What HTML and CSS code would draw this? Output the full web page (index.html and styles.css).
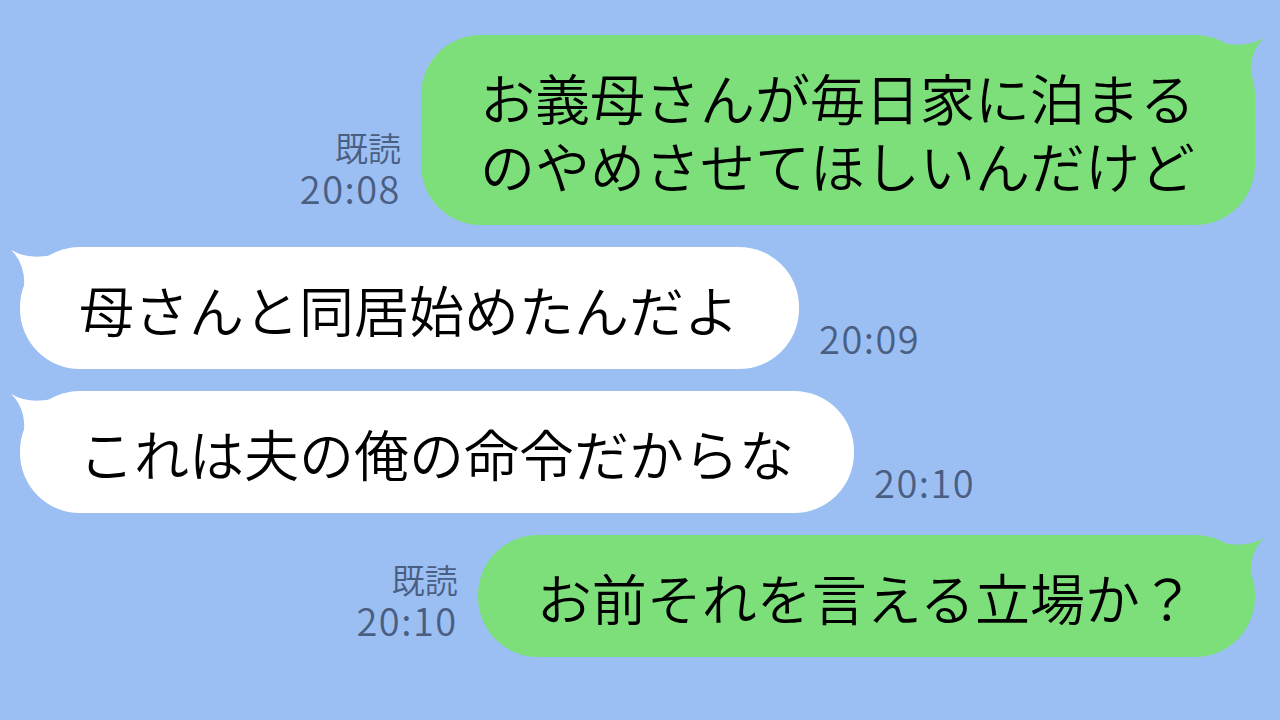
FILE: index.html
```html
<!DOCTYPE html>
<html lang="ja">
<head>
  <meta charset="UTF-8">
  <meta name="viewport" content="width=device-width, initial-scale=1.0">
  <title>トーク</title>
  <link rel="stylesheet" href="styles.css">
</head>
<body>
  <div class="chat">
    <div class="row mine">
      <div class="meta"><span class="read">既読</span><span class="time">20:08</span></div>
      <div class="bubble">
        <svg class="tail" width="65" height="60" viewBox="0 0 65 60"><path d="M14 12 Q40 19 59 8 Q44 22 46 47 L14 47 Z"/></svg>
        お義母さんが毎日家に泊まる<br>のやめさせてほしいんだけど
      </div>
    </div>

    <div class="row theirs">
      <div class="bubble">
        <svg class="tail" width="65" height="60" viewBox="0 0 65 60"><path d="M14 12 Q40 19 59 8 Q44 22 46 47 L14 47 Z"/></svg>
        母さんと同居始めたんだよ
      </div>
      <div class="meta"><span class="time">20:09</span></div>
    </div>

    <div class="row theirs">
      <div class="bubble">
        <svg class="tail" width="65" height="60" viewBox="0 0 65 60"><path d="M14 12 Q40 19 59 8 Q44 22 46 47 L14 47 Z"/></svg>
        これは夫の俺の命令だからな
      </div>
      <div class="meta"><span class="time">20:10</span></div>
    </div>

    <div class="row mine">
      <div class="meta"><span class="read">既読</span><span class="time">20:10</span></div>
      <div class="bubble">
        <svg class="tail" width="65" height="60" viewBox="0 0 65 60"><path d="M14 12 Q40 19 59 8 Q44 22 46 47 L14 47 Z"/></svg>
        お前それを言える立場か？
      </div>
    </div>
  </div>
</body>
</html>
```

FILE: styles.css
```css
html, body { margin: 0; height: 100%; }
body { background: #9cbff3; font-family: "Noto Sans CJK JP", "Noto Sans", sans-serif; overflow: hidden; }
.chat { display: flex; flex-direction: column; gap: 22px; padding: 35px 25px 0 20px; }
.row { display: flex; align-items: flex-end; gap: 20px; }
.row.mine { justify-content: flex-end; }
.bubble { position: relative; padding: 27px 60px 27px 59px; border-radius: 60px; font-size: 55px; font-weight: 350; line-height: 68px; color: #000; white-space: nowrap; }
.mine .bubble { background: #7ddf7a; }
.theirs .bubble { background: #fff; }
.tail { position: absolute; top: -5px; }
.mine .tail { right: -15px; fill: #7ddf7a; }
.theirs .tail { left: -15px; fill: #fff; transform: scaleX(-1); }
.meta { display: flex; flex-direction: column; align-items: flex-end; color: #4a5e82; padding-bottom: 16px; }
.theirs .meta { align-items: flex-start; padding-bottom: 10px; }
.read { font-size: 33px; line-height: 40px; font-weight: 350; }
.time { font-size: 38px; line-height: 42px; letter-spacing: 1.5px; font-weight: 350; }
```
